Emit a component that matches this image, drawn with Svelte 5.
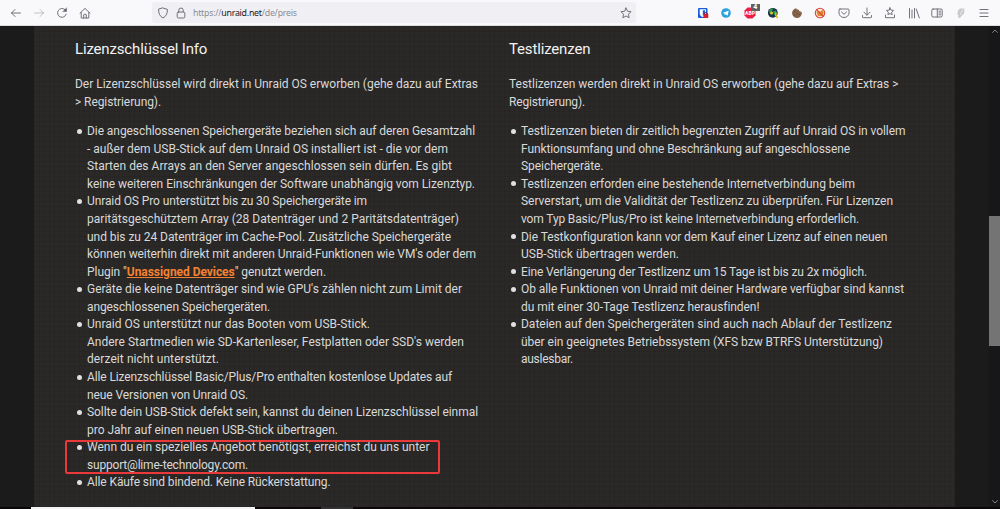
<script lang="ts">
  // text of a line and the width it is set to
  type Line = [string, number];

  const licenseItems: Line[][] = [
    [
      ['Die angeschlossenen Speichergeräte beziehen sich auf deren Gesamtzahl', 388],
      ['- außer dem USB-Stick auf dem Unraid OS installiert ist - die vor dem', 361],
      ['Starten des Arrays an den Server angeschlossen sein dürfen. Es gibt', 365],
      ['keine weiteren Einschränkungen der Software unabhängig vom Lizenztyp.', 388],
    ],
    [
      ['Unraid OS Pro unterstützt bis zu 30 Speichergeräte im', 280],
      ['paritätsgeschütztem Array (28 Datenträger und 2 Paritätsdatenträger)', 372],
      ['und bis zu 24 Datenträger im Cache-Pool. Zusätzliche Speichergeräte', 364],
      ["können weiterhin direkt mit anderen Unraid-Funktionen wie VM's oder dem", 389],
      ['Plugin "[Unassigned Devices]" genutzt werden.', 239],
    ],
    [
      ["Geräte die keine Datenträger sind wie GPU's zählen nicht zum Limit der", 375],
      ['angeschlossenen Speichergeräten.', 183],
    ],
    [
      ['Unraid OS unterstützt nur das Booten vom USB-Stick.', 283],
      ["Andere Startmedien wie SD-Kartenleser, Festplatten oder SSD's werden", 377],
      ['derzeit nicht unterstützt.', 132],
    ],
    [
      ['Alle Lizenzschlüssel Basic/Plus/Pro enthalten kostenlose Updates auf', 365],
      ['neue Versionen von Unraid OS.', 161],
    ],
    [
      ['Sollte dein USB-Stick defekt sein, kannst du deinen Lizenzschlüssel einmal', 391],
      ['pro Jahr auf einen neuen USB-Stick übertragen.', 251],
    ],
    [
      ['Wenn du ein spezielles Angebot benötigst, erreichst du uns unter', 342.5],
      ['support@lime-technology.com.', 161],
    ],
    [['Alle Käufe sind bindend. Keine Rückerstattung.', 243.5]],
  ];

  const trialItems: Line[][] = [
    [
      ['Testlizenzen bieten dir zeitlich begrenzten Zugriff auf Unraid OS in vollem', 384.5],
      ['Funktionsumfang und ohne Beschränkung auf angeschlossene', 329],
      ['Speichergeräte.', 82.5],
    ],
    [
      ['Testlizenzen erforden eine bestehende Internetverbindung beim', 334],
      ['Serverstart, um die Validität der Testlizenz zu überprüfen. Für Lizenzen', 372],
      ['vom Typ Basic/Plus/Pro ist keine Internetverbindung erforderlich.', 338],
    ],
    [
      ['Die Testkonfiguration kann vor dem Kauf einer Lizenz auf einen neuen', 366],
      ['USB-Stick übertragen werden.', 158],
    ],
    [['Eine Verlängerung der Testlizenz um 15 Tage ist bis zu 2x möglich.', 346]],
    [
      ['Ob alle Funktionen von Unraid mit deiner Hardware verfügbar sind kannst', 383],
      ['du mit einer 30-Tage Testlizenz herausfinden!', 238],
    ],
    [
      ['Dateien auf den Speichergeräten sind auch nach Ablauf der Testlizenz', 371],
      ['über ein geeignetes Betriebssystem (XFS bzw BTRFS Unterstützung)', 362],
      ['auslesbar.', 52],
    ],
  ];

  const columns: { title: string; intro: Line[]; items: Line[][] }[] = [
    {
      title: 'Lizenzschlüssel Info',
      intro: [
        ['Der Lizenzschlüssel wird direkt in Unraid OS erworben (gehe dazu auf Extras', 403],
        ['> Registrierung).', 86],
      ],
      items: licenseItems,
    },
    {
      title: 'Testlizenzen',
      intro: [
        ['Testlizenzen werden direkt in Unraid OS erworben (gehe dazu auf Extras >', 389.5],
        ['Registrierung).', 76],
      ],
      items: trialItems,
    },
  ];

  // "[...]" marks the linked part of a line
  const parts = (text: string) => text.split(/[\[\]]/);

  // spread the letters of a line evenly over its width
  function fit(node: HTMLElement, width: number) {
    const current = node.getBoundingClientRect().width;
    const count = node.textContent?.length ?? 1;
    node.style.letterSpacing = `${(width - current) / count}px`;
  }
</script>

{#snippet textLine(line: Line)}
  <span class="line" use:fit={line[1]}>{#each parts(line[0]) as part, i}{#if i === 1}<a href="#devices">{part}</a>{:else}{part}{/if}{/each}</span>
{/snippet}

<div class="browser">
  <header class="toolbar">
    <nav class="nav">
      <svg viewBox="0 0 12 12"><path d="M10.500 6h-9M5 2.500 1.500 6 5 9.500" /></svg>
      <svg class="disabled" viewBox="0 0 12 12"><path d="M1.500 6h9M7 2.500 10.500 6 7 9.500" /></svg>
      <svg viewBox="0 0 12 12"><path d="M10.200 7.200A4.400 4.400 0 1 1 9 2.700l1 1" /><path d="M10.600 1v3.600H7z" fill="#5b5b66" stroke-width=".4" /></svg>
      <svg viewBox="0 0 12 12"><path d="M1 6.200 6 1.400l5 4.800M2.200 5.500V11h7.600V5.500M4.700 11V7.700q1.300-1.400 2.600 0V11" /></svg>
    </nav>
    <div class="urlbar">
      <svg viewBox="0 0 12 12"><path d="M6 1 10.400 2.400C10.600 6.500 9 9.500 6 11 3 9.500 1.400 6.500 1.600 2.400z" /></svg>
      <svg viewBox="0 0 12 12"><rect x="2.200" y="5" width="7.600" height="6" rx="1.200" /><path d="M3.800 5V3.200a2.200 2.200 0 0 1 4.400 0V5" /></svg>
      <span class="url">https://<b>unraid.net</b>/de/preis</span>
      <svg viewBox="0 0 12 12"><path d="m6 1 1.500 3.200 3.500.5-2.500 2.500.6 3.500L6 9 2.900 10.700l.6-3.500L1 4.700l3.500-.5z" /></svg>
    </div>
    <div class="extensions">
      <svg viewBox="0 0 12 12">
        <rect class="fill" x="1" y="1" width="9.500" height="10" rx="1" fill="#175ddc" />
        <path class="fill" d="M2.700 2.200h6.200v4Q9 9 5.700 10 2.700 9 2.700 6z" fill="#fff" />
        <path class="fill" d="M5.800 3.200h2.200v4q-.6 1-2.200 1.600z" fill="#175ddc" />
        <rect class="fill" x="6.500" y="7" width="4.800" height="4" fill="#d6202f" />
        <path d="M7.700 7V6q1.200-1.200 2.400 0v1" stroke="#8a1a2c" />
      </svg>
      <svg viewBox="0 0 12 12">
        <circle class="fill" cx="6" cy="6" r="4.800" fill="#2aa1da" />
        <path class="fill" d="m2.700 5.900 6-2.400-1 5.200-2-1.400-.9.900-.3-1.700z" fill="#fff" />
      </svg>
      <div class="abp">
        <svg viewBox="0 0 12 12">
          <path class="fill" d="M3.500.5h5l3 3v5l-3 3h-5l-3-3v-5z" fill="#ed1e45" />
          <text x="6" y="8" text-anchor="middle">ABP</text>
        </svg>
        <span class="badge">4</span>
      </div>
      <svg viewBox="0 0 12 12">
        <circle class="fill" cx="5.800" cy="5.800" r="4.900" fill="#17364b" />
        <path class="fill" d="M2 3.500q2-2.500 4-2L5 4.500 2.700 6.500zM6 4.500l3-1 .8 3-2.300 2z" fill="#2d9850" />
        <circle class="fill" cx="4.600" cy="6" r="1.600" fill="#d9c52a" />
        <path d="M8.800 6v2.500l1.500 2" stroke="#dfb716" stroke-width="1.600" />
      </svg>
      <svg viewBox="0 0 12 12">
        <path class="fill" d="M5 1.300Q6 3 7.700 2.700 8 4.500 10.700 5A4.900 4.900 0 1 1 5 1.300" fill="#866348" />
        <path d="M3.700 4.500v.1M6 7v.1M3.500 8v.1M8.200 7.500v.1" stroke="#5d4130" stroke-width="1" />
      </svg>
      <svg viewBox="0 0 12 12">
        <circle class="fill" cx="6" cy="6" r="4.600" fill="#fbe3d2" />
        <path class="fill" d="m2.500 5 2-1.200 1.500 1 2.500-1.800 1.300 2L8.500 9H4z" fill="#dc8a2a" />
        <circle cx="6" cy="6" r="4.700" stroke="#d9453d" stroke-width="1.100" />
        <path d="m2.600 2.600 6.800 6.800" stroke="#d9453d" stroke-width="1.100" />
      </svg>
      <svg viewBox="0 0 12 12"><path d="M2 2h8q1 0 1 1v3A5 4.500 0 0 1 1 6V3q0-1 1-1zM3.500 5 6 7.300 8.500 5" /></svg>
      <svg viewBox="0 0 12 12"><path d="M6 1v7M3 5.200l3 3 3-3M1.500 8.500V10q0 .7.700.7h7.600q.7 0 .7-.7V8.500" /></svg>
      <svg viewBox="0 0 12 12"><path d="m6 .8 1 2.300 2.500.3-1.800 1.800.4 2.500L6 6.500 3.900 7.700l.4-2.500-1.800-1.800L5 3.100zM1.500 8v2.700h9V8" /></svg>
      <svg viewBox="0 0 12 12"><path d="M1.500 1.500V11M4 3v8M6.500 1.500V11M8.300 2l3 9" /></svg>
      <svg viewBox="0 0 12 12"><rect x=".8" y="2" width="10.400" height="8" rx="1.300" /><path d="M6.300 2v8M8 4.200h1.700M8 6h1.700M8 7.800h1.700" /></svg>
      <svg viewBox="0 0 12 12"><path class="fill" d="M5 1.500h4.500L9 6.500 6.500 9 5 11 3 10.500l.5-2.500H2.300L3 3.500z" fill="#c9c9cd" /><path d="M7.500 3 5.500 7.500" stroke="#eee" /></svg>
      <svg viewBox="0 0 12 12"><path d="M2 2.500h8M2 6h8M2 9.500h8" /></svg>
    </div>
  </header>

  <div class="viewport">
    <main class="page">
      {#each columns as column}
        <section class="column">
          <h2>{column.title}</h2>
          <p>
            {#each column.intro as line}
              {@render textLine(line)}
            {/each}
          </p>
          <ul>
            {#each column.items as item}
              <li>
                {#each item as line}
                  {@render textLine(line)}
                {/each}
              </li>
            {/each}
          </ul>
        </section>
      {/each}
      <div class="marker"></div>
    </main>
    <div class="scrollbar">
      <svg viewBox="0 0 8 8"><path d="M1.500 5.500 4 3l2.500 2.500" /></svg>
      <div class="thumb"></div>
      <svg viewBox="0 0 8 8"><path d="M1.500 2.500 4 5l2.500-2.500" /></svg>
    </div>
  </div>
  <footer class="taskbar">
    <div class="task active"></div>
    <div class="task"></div>
  </footer>
</div>

<style>
  :global(body) {
    margin: 0;
    overflow: hidden;
  }

  .browser {
    width: 1000px;
    height: 509px;
    display: flex;
    flex-direction: column;
    background: #1b1b1b;
    font-family: Roboto, "Liberation Sans", sans-serif;
  }

  svg {
    display: block;
    flex: none;
    width: 12px;
    height: 12px;
    fill: none;
    stroke: #62626c;
    stroke-width: 0.9;
    stroke-linecap: round;
    stroke-linejoin: round;
    overflow: visible;
  }

  .fill {
    stroke: none;
  }

  /* Toolbar */
  .toolbar {
    height: 26px;
    box-sizing: border-box;
    flex: none;
    display: flex;
    align-items: center;
    background: #f9f9fb;
    border-bottom: 1px solid #dcdddf;
  }

  .nav {
    display: flex;
    gap: 11.3px;
    padding-left: 9.5px;
    width: 144px;
    box-sizing: border-box;
    margin-right: 8px;
  }

  .disabled {
    opacity: 0.4;
  }

  .urlbar {
    display: flex;
    align-items: center;
    width: 484px;
    height: 21px;
    box-sizing: border-box;
    padding: 0 4px 0 5px;
    gap: 6px;
    background: #f0f0f4;
    border-radius: 3px;
  }

  .url {
    flex: 1;
    margin: 1px 0 0;
    font-family: "Noto Sans", "Open Sans", sans-serif;
    font-size: 8.8px;
    letter-spacing: -0.25px;
    color: #8c8c94;
  }

  .url b {
    font-weight: 400;
    color: #15141a;
  }

  .extensions {
    display: flex;
    gap: 11.43px;
    margin-left: 61px;
  }

  .abp {
    position: relative;
  }

  .abp text {
    font-size: 5px;
    font-weight: 700;
    fill: #fff;
    stroke: none;
  }

  .badge {
    position: absolute;
    left: 7px;
    top: -3px;
    width: 9px;
    height: 7px;
    font-size: 7px;
    line-height: 7px;
    font-weight: 700;
    text-align: center;
    color: #fff;
    background: #5f5f66;
  }

  /* Page */
  .viewport {
    flex: 1;
    min-height: 0;
    display: flex;
    justify-content: space-between;
    padding-left: 34px;
  }

  .page {
    position: relative;
    width: 921px;
    box-sizing: border-box;
    padding: 13px 0 0 41px;
    display: flex;
    align-items: flex-start;
    background:
      repeating-linear-gradient(90deg, rgba(0, 0, 0, 0.08) 0 1px, transparent 1px 5px),
      repeating-linear-gradient(rgba(0, 0, 0, 0.08) 0 1px, transparent 1px 5px),
      #2a2928;
  }

  .column {
    width: 434px;
    flex: none;
  }

  h2 {
    margin: 0 0 17px;
    font-size: 15px;
    line-height: 20px;
    font-weight: 400;
    letter-spacing: -0.16px;
    color: #f2f2f2;
  }

  p,
  ul {
    margin: 0;
    padding: 0;
    font-size: 12px;
    line-height: 17.57px;
    color: #d9d9d9;
  }

  p {
    margin-bottom: 12px;
  }

  ul {
    list-style: none;
    padding-left: 12px;
  }

  li {
    position: relative;
  }

  li::before {
    content: '';
    position: absolute;
    left: -10.5px;
    top: 5.5px;
    width: 5px;
    height: 5px;
    border-radius: 50%;
    background: #e0e0e0;
  }

  .line {
    display: block;
    width: max-content;
    white-space: nowrap;
  }

  a {
    color: #f58233;
    font-weight: 700;
    text-decoration: underline;
  }

  .marker {
    position: absolute;
    left: 31px;
    top: 414px;
    width: 371px;
    height: 30px;
    border: 2px solid #e9393b;
    border-radius: 2px;
  }

  /* Scrollbar */
  .scrollbar {
    width: 11px;
    display: flex;
    flex-direction: column;
    align-items: center;
    background: #17171a;
  }

  .scrollbar svg {
    width: 8px;
    height: 10px;
    stroke: #8a8a8a;
  }

  .thumb {
    width: 11px;
    height: 130px;
    margin: 180px 0 auto;
    background: #747475;
  }

  .taskbar {
    height: 2px;
    flex: none;
    display: flex;
    gap: 66px;
    padding-left: 31px;
    background: #0c080a;
  }

  .task {
    width: 32px;
    background: #333;
  }

  .active {
    width: 224px;
    background: #f2f2f2;
  }
</style>
